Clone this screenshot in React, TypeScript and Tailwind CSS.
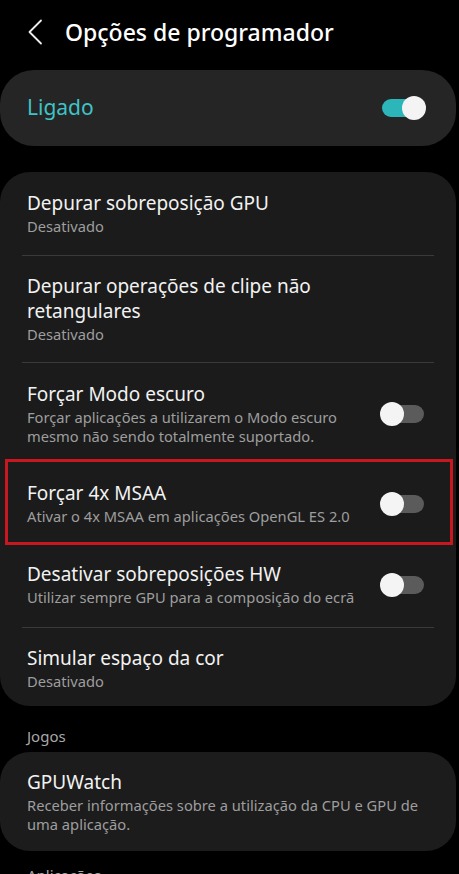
type Row = {
  title: string;
  sub?: string;
  toggle?: boolean;
  highlight?: boolean;
  divider?: boolean;
  pad: string;
};

const rows: Row[] = [
  { title: 'Depurar sobreposição GPU', sub: 'Desativado', divider: true, pad: 'pt-[19px] pb-[19px]' },
  {
    title: 'Depurar operações de clipe não retangulares',
    sub: 'Desativado',
    divider: true,
    pad: 'pt-[18px] pb-[18px]',
  },
  {
    title: 'Forçar Modo escuro',
    sub: 'Forçar aplicações a utilizarem o Modo escuro mesmo não sendo totalmente suportado.',
    toggle: true,
    pad: 'pt-[19px] pb-[13px]',
  },
  {
    title: 'Forçar 4x MSAA',
    sub: 'Ativar o 4x MSAA em aplicações OpenGL ES 2.0',
    toggle: true,
    highlight: true,
    pad: 'pt-[19px] pb-[16px]',
  },
  {
    title: 'Desativar sobreposições HW',
    sub: 'Utilizar sempre GPU para a composição do ecrã',
    toggle: true,
    divider: true,
    pad: 'pt-[17px] pb-[20px]',
  },
  { title: 'Simular espaço da cor', sub: 'Desativado', pad: 'pt-[18px] pb-[15px]' },
];

function Toggle({ on }: { on?: boolean }) {
  return (
    <div className="relative h-[24px] w-[45px] shrink-0">
      <div
        className={`absolute left-[1px] right-[1px] top-[3px] h-[18px] rounded-full ${
          on ? 'bg-[#2cb6b9]' : 'bg-[#5b5b5b]'
        }`}
      />
      <div
        className={`absolute top-0 h-[24px] w-[24px] rounded-full bg-[#f4f4f4] ${
          on ? 'right-0' : 'left-0'
        }`}
      />
    </div>
  );
}

function SettingRow({ row }: { row: Row }) {
  const body = (
    <div className={`flex items-center gap-4 pl-[27px] pr-[31px] ${row.pad}`}>
      <div className="min-w-0 flex-1">
        <div className="text-[19px] leading-[25px] text-[#f2f2f2]">{row.title}</div>
        {row.sub && (
          <div className="mt-[1px] text-[14.7px] leading-[19px] text-[#9e9e9e]">{row.sub}</div>
        )}
      </div>
      {row.toggle && <Toggle />}
    </div>
  );

  return (
    <div>
      {row.highlight ? (
        <div className="ml-[5px] mr-[3px] border-[3px] border-[#c8171e]">
          <div className="-ml-[8px] -mr-[6px]">{body}</div>
        </div>
      ) : (
        body
      )}
      {row.divider && <div className="mx-[22px] h-px bg-[#3a3a3a]" />}
    </div>
  );
}

export default function App() {
  return (
    <div
      className="h-[874px] w-[459px] overflow-hidden bg-black"
      style={{ fontFamily: '"Noto Sans", Roboto, sans-serif' }}
    >
      {/* Header */}
      <div className="flex h-[70px] items-center pb-[6px] pl-[27px]">
        <svg width="16" height="26" viewBox="0 0 16 26" fill="none" className="shrink-0">
          <polyline
            points="14,1.5 2.5,13 14,24.5"
            stroke="#eeeeee"
            strokeWidth="1.8"
            strokeLinecap="round"
            strokeLinejoin="round"
          />
        </svg>
        <h1 className="ml-[22px] text-[23px] font-medium text-white">Opções de programador</h1>
      </div>

      {/* Master switch */}
      <div className="mr-[3px] flex h-[76px] items-center justify-between rounded-[34px] bg-[#252525] pl-[27px] pr-[30px]">
        <span className="text-[21px] text-[#3fc3c6]">Ligado</span>
        <Toggle on />
      </div>

      {/* Options list */}
      <div className="mr-[3px] mt-[26px] rounded-[30px] bg-[#1b1b1b]">
        {rows.map((r) => (
          <SettingRow key={r.title} row={r} />
        ))}
      </div>

      <div className="pl-[27px] pt-[20px] pb-[6px] text-[15px] leading-5 text-[#a8a8a8]">Jogos</div>

      <div className="mr-[3px] rounded-[30px] bg-[#1c1c1c] pb-[17px] pl-[27px] pr-[31px] pt-[18px]">
        <div className="text-[19px] leading-[25px] text-[#f2f2f2]">GPUWatch</div>
        <div className="mt-[1px] text-[14.7px] leading-[19px] text-[#9e9e9e]">
          Receber informações sobre a utilização da CPU e GPU de uma aplicação.
        </div>
      </div>

      <div className="pl-[27px] pt-[14px] text-[15px] leading-5 text-[#a8a8a8]">Aplicações</div>
    </div>
  );
}
